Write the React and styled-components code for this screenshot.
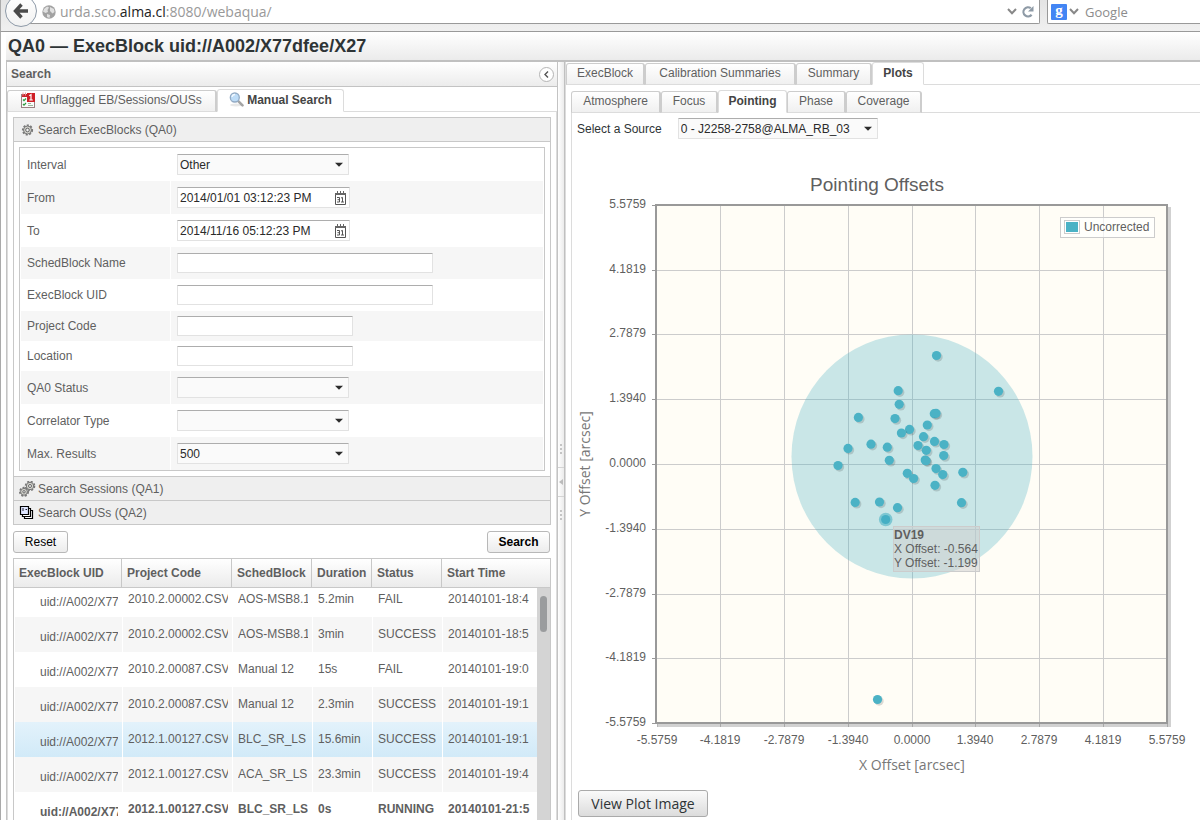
import React from "react";
import styled, { createGlobalStyle, css } from "styled-components";

const Global = createGlobalStyle`
  *, *::before, *::after { box-sizing: border-box; }
  html, body { margin: 0; height: 100%; overflow: hidden; }
  body {
    background: #fff;
    color: #5f5f5f;
    font-family: "Liberation Sans", Arial, sans-serif;
    font-size: 12px;
    line-height: 16px;
  }
  button, input, select { font: inherit; color: inherit; margin: 0; }
  #root { height: 100%; }
`;

const Page = styled.div`
  display: flex;
  flex-direction: column;
  height: 100vh;
  overflow: hidden;
`;

/* ---------- browser bar ---------- */

const BrowserBar = styled.header`
  display: flex;
  align-items: flex-start;
  flex: none;
  height: 32px;
  padding-left: 5px;
  background: linear-gradient(#e4e4e4, #f0f0f0);
  border-bottom: 1px solid #999;
  border-left: 1px solid #aaa;
  font-family: "Open Sans", sans-serif;
  font-size: 13px;
  line-height: 24px;
  color: #999;
`;

const BackButton = styled.button`
  position: relative;
  z-index: 1;
  flex: none;
  display: grid;
  place-items: center;
  width: 32px;
  height: 32px;
  margin: -5px -8px 0 -1px;
  padding: 0;
  border: 1px solid #8e9aa8;
  border-radius: 50%;
  background: linear-gradient(#fff, #f2f2f2);
`;

const AddressField = styled.div`
  display: flex;
  align-items: center;
  flex: 1;
  height: 24px;
  gap: 4px;
  padding: 0 4px 0 13px;
  background: #fff;
  border: solid #999;
  border-width: 0 1px 1px 0;
  border-radius: 0 0 2px 0;
`;

const Address = styled.div`
  flex: 1;
  font-size: 14px;
  strong { font-weight: 400; color: #222; }
`;

const WebSearch = styled.form`
  display: flex;
  align-items: center;
  flex: none;
  gap: 2px;
  width: 153px;
  height: 24px;
  margin-left: 7px;
  padding-left: 3px;
  background: #fff;
  border: solid #999;
  border-width: 0 0 1px 1px;
  border-radius: 0 0 0 2px;
  input {
    width: 100px;
    padding: 0 0 0 4px;
    border: 0;
    background: none;
    font-size: 13px;
  }
  input::placeholder { color: #8c8c8c; opacity: 1; }
`;

const Engine = styled.span`
  width: 16px;
  height: 16px;
  border-radius: 1px;
  background: #4285f4;
  color: #fff;
  font: 700 15px/12px "Liberation Serif", serif;
  text-align: center;
`;

/* ---------- page frame ---------- */

const Workspace = styled.div`
  display: flex;
  flex-direction: column;
  flex: 1;
  min-height: 0;
  padding-left: 5px;
  border-left: 1px solid #aaa;
`;

const Title = styled.h1`
  flex: none;
  height: 30px;
  margin: 0;
  padding-left: 2px;
  background: linear-gradient(#fff, #ebebeb);
  border-bottom: 2px solid #c0c0c0;
  color: #2e3436;
  font-size: 18px;
  line-height: 28px;
`;

const Split = styled.main`
  display: flex;
  flex: 1;
  min-height: 0;
`;

const SearchSide = styled.section`
  display: flex;
  flex-direction: column;
  flex: none;
  width: 552px;
  border: solid #c3c3c3;
  border-width: 0 1px;
`;

const SideHeader = styled.div`
  display: flex;
  align-items: center;
  justify-content: space-between;
  flex: none;
  height: 25px;
  padding: 0 3px 0 4px;
  background: linear-gradient(#fff, #ececec);
  border-bottom: 1px solid #c3c3c3;
  h2 { margin: 0; font-size: 12px; }
`;

const CollapseButton = styled.button`
  display: grid;
  place-items: center;
  width: 15px;
  height: 15px;
  padding: 0;
  border: 1px solid #b4b4b4;
  border-radius: 50%;
  background: #fff;
`;

const Splitter = styled.div`
  display: flex;
  flex-direction: column;
  align-items: center;
  flex: none;
  gap: 13px;
  width: 7px;
  padding-top: 382px;
  background: linear-gradient(90deg, #fff, #ebebeb);
  border-right: 1px solid #c0c0c0;
`;

const Handle = styled.div`
  display: grid;
  place-items: center;
  width: 100%;
  height: 30px;
  border: solid #d4d4d4;
  border-width: 1px 0;
`;

const ViewSide = styled.section`
  display: flex;
  flex-direction: column;
  flex: 1;
  min-width: 0;
  border-left: 1px solid #dcdcdc;
`;

/* ---------- tabs ---------- */

const TabBar = styled.div`
  display: flex;
  align-items: flex-end;
  flex: none;
  height: ${(p) => p.$height}px;
  border-bottom: 1px solid #dcdcdc;
`;

const Tab = styled.button`
  display: flex;
  align-items: center;
  justify-content: center;
  flex: none;
  gap: 2px;
  width: ${(p) => p.$width}px;
  height: 22px;
  margin-bottom: -1px;
  padding: 0 0 2px;
  border: 1px solid #cdcdcd;
  border-right-width: 2px;
  border-radius: 3px 3px 0 0;
  background: linear-gradient(#fff, #f0f0f0);
  border-bottom-color: #dcdcdc;
  ${(p) =>
    p.$active &&
    css`
      height: 23px;
      border: 1px solid #dcdcdc;
      border-bottom-color: #fff;
      background: #fff;
      font-weight: 700;
      color: #444;
    `}
`;

/* ---------- accordion and form ---------- */

const SideBody = styled.div`
  display: flex;
  flex-direction: column;
  flex: 1;
  min-height: 0;
  padding: 5px 5px 0;
  border: solid #dcdcdc;
  border-width: 0 1px;
`;

const Accordion = styled.div`
  flex: none;
  border: solid #c8c8c8;
  border-width: 0 1px 1px;
`;

const AccordionHead = styled.button`
  display: flex;
  align-items: center;
  gap: 2px;
  width: 100%;
  height: ${(p) => (p.$open ? 25 : 24)}px;
  padding: 0 5px;
  border: solid #c8c8c8;
  border-width: ${(p) => (p.$open ? "1px 0" : "1px 0 0")};
  background: #efefef;
`;

const FormFrame = styled.form`
  margin: 5px;
  border: 1px solid #c8c8c8;
`;

const Field = styled.div`
  display: flex;
  height: ${(p) => p.$height}px;
  margin: 0 1px;
  &:nth-child(even) { background: #f6f6f6; }
  label {
    display: flex;
    align-items: center;
    width: 150px;
    padding-left: 6px;
    border-right: 1px solid #fff;
  }
`;

const Control = styled.div`
  display: flex;
  align-items: center;
  padding-left: 6px;
`;

const boxed = css`
  border: 1px solid #e2e2e2;
  border-top-color: #adadad;
  border-radius: 1px;
  color: #2a2a2a;
`;

const TextBox = styled.input`
  ${boxed}
  width: ${(p) => p.$width}px;
  height: ${(p) => (p.$tall ? 21 : 20)}px;
  padding: 0 2px;
  background: #fff;
`;

const SelectWrap = styled.span`
  display: grid;
  align-items: center;
  width: ${(p) => p.$width}px;
  select, svg { grid-area: 1 / 1; }
  svg { justify-self: end; margin-right: 5px; pointer-events: none; }
`;

const SelectBox = styled.select`
  ${boxed}
  appearance: none;
  width: 100%;
  height: 21px;
  padding: 0 16px 0 2px;
  background: #fafafa;
`;

const DateWrap = styled.span`
  display: grid;
  align-items: center;
  input, svg { grid-area: 1 / 1; }
  svg { justify-self: end; margin-right: 3px; }
`;

const Actions = styled.div`
  display: flex;
  justify-content: space-between;
  flex: none;
  margin: 6px 1px 5px 0;
`;

const ActionButton = styled.button`
  width: ${(p) => p.$width}px;
  height: 22px;
  padding: 0;
  border: 1px solid #b8b8b8;
  border-radius: 3px;
  background: linear-gradient(#fff, #ececec);
  color: #000;
  font-weight: ${(p) => (p.$primary ? 700 : 400)};
`;

/* ---------- results ---------- */

const ResultFrame = styled.div`
  position: relative;
  flex: 1;
  min-height: 0;
  overflow: hidden;
  border: solid #c8c8c8;
  border-width: 1px 1px 0;
`;

const ResultTable = styled.table`
  width: 100%;
  table-layout: fixed;
  border-collapse: separate;
  border-spacing: 0;
  th, td {
    overflow: hidden;
    white-space: nowrap;
    text-align: left;
  }
  th {
    height: 29px;
    padding: 0 0 0 5px;
    border: solid #c8c8c8;
    border-width: 0 1px 1px 0;
    background: linear-gradient(#fff, #ebebeb);
  }
  th:last-child { border-right: 0; }
`;

const Row = styled.tr`
  height: ${(p) => (p.$first ? 29 : 35)}px;
  background: ${(p) =>
    p.$selected
      ? "linear-gradient(#e3f2fb, #d1eaf8)"
      : p.$shaded
        ? "#f6f6f6"
        : "#fff"};
  font-weight: ${(p) => (p.$running ? 700 : 400)};
  td {
    vertical-align: bottom;
    padding: 0 0 10px 5px;
    border-left: 1px solid #fff;
  }
  td:first-child { padding: 0 0 7px 25px; }
  td:last-child { padding-right: 18px; }
  div { overflow: hidden; margin-right: 4px; }
  td:last-child div { margin-right: 0; }
`;

const ScrollTrack = styled.div`
  position: absolute;
  top: 29px;
  right: 0;
  bottom: 0;
  width: 13px;
  padding: 8px 3px;
  background: #d4d4d4;
  &::before {
    content: "";
    display: block;
    width: 7px;
    height: 36px;
    border-radius: 4px;
    background: #9a9c9e;
  }
`;

/* ---------- plot side ---------- */

const ViewBody = styled.div`
  display: flex;
  flex-direction: column;
  flex: 1;
  min-height: 0;
  padding: 6px 0 0 5px;
`;

const PlotPane = styled.div`
  flex: 1;
  border-left: 1px solid #dcdcdc;
`;

const SourceRow = styled.div`
  display: flex;
  align-items: center;
  gap: 16px;
  padding: 5px 0 0 5px;
  color: #2e3436;
`;

const Chart = styled.svg`
  display: block;
  width: 100%;
  font-family: "Liberation Sans", Arial, sans-serif;
  font-size: 12px;
  fill: #5f5f5f;
`;

const PlotButton = styled.button`
  width: 130px;
  height: 27px;
  margin-left: 6px;
  padding: 0;
  border: 1px solid #aaa;
  border-radius: 3px;
  background: linear-gradient(#fafafa, #dcdcdc);
  color: #2e3436;
  font-family: "Open Sans", sans-serif;
  font-size: 14px;
`;

/* ---------- icons ---------- */

const Arrow = () => (
  <svg width="9" height="5" viewBox="0 0 9 5"><path d="M0 0.800h8L4 4.800z" fill="#2c2c2c" /></svg>
);

const Chevron = () => (
  <svg width="10" height="8" viewBox="0 0 10 8"><path d="M1 1l4 4.200 4-4.200" fill="none" stroke="#888" strokeWidth="2" /></svg>
);

const BackArrow = () => (
  <svg width="16" height="16" viewBox="0 0 16 16"><path d="M8.500 1.500L2.500 8l6 6.500M3 8h12" fill="none" stroke="#4a4a4a" strokeWidth="3.400" /></svg>
);

const Globe = () => (
  <svg width="14" height="14" viewBox="0 0 14 14">
    <circle cx="7" cy="7" r="6.700" fill="#a2a2a2" />
    <path d="M2 4l3-2.500 2 1L5.500 5 6 7 3.500 8 1 6.500zM8 2l4 2 .5 3-2 1.500L8 6zM5 9l3 1-.5 3L5 12z" fill="#e0e0e0" />
  </svg>
);

const Reload = () => (
  <svg width="14" height="14" viewBox="0 0 14 14">
    <path d="M10.600 9.800A4.600 4.600 0 1 1 9.800 3.200" fill="none" stroke="#8e9aa6" strokeWidth="2.200" />
    <path d="M12.500 1v5.600H7z" fill="#8e9aa6" />
  </svg>
);

const Checklist = () => (
  <svg width="17" height="16" viewBox="0 0 17 16">
    <rect x="0.500" y="2.500" width="13" height="13" fill="#fafafa" stroke="#9a8080" />
    <path d="M1 2h12v3H1z" fill="#c8262c" />
    <path d="M2 0.500v3M4.500 0.500v3" stroke="#e9a0a0" />
    <rect x="6" y="1" width="8" height="9" fill="#cf1f26" />
    <path d="M8.300 3.800l1.700-1.200V8M8.300 8h3.500" fill="none" stroke="#fff" strokeWidth="1.200" />
    <path d="M2 7.500l1 1.200L5 6.500M2 12l1 1.200 2-2.200" fill="none" stroke="#2c9a3c" strokeWidth="1.200" />
    <path d="M7 13.500h5M7 11.500h3" stroke="#9bb89b" />
  </svg>
);

const Magnifier = () => (
  <svg width="16" height="15" viewBox="0 0 16 15">
    <ellipse cx="7" cy="13" rx="6" ry="1.500" fill="#e8e8e8" />
    <path d="M9 8.800l4.500 4.500" stroke="#a4a4a4" strokeWidth="2.600" strokeLinecap="round" />
    <circle cx="5.800" cy="5.500" r="4.500" fill="#bddcf7" stroke="#92aac4" strokeWidth="1.300" />
    <path d="M3 5a3 3 0 0 1 3-2.500" fill="none" stroke="#f2f9ff" strokeWidth="1.300" />
  </svg>
);

const GearShape = ({ x, y, r }) => (
  <g transform={`translate(${x} ${y})`}>
    <circle r={r} fill="none" stroke="#777" strokeWidth="2" strokeDasharray="2 1.400" />
    <circle r={r - 0.6} fill="#d2d2cc" stroke="#777" />
    <circle r={r - 2.8} fill="#f4f4f4" stroke="#666" />
  </g>
);

const Gear = () => (
  <svg width="17" height="16" viewBox="0 0 17 16"><GearShape x={8.5} y={8} r={4.6} /></svg>
);

const Gears = () => (
  <svg width="17" height="16" viewBox="0 0 17 16">
    <GearShape x={5} y={10.8} r={4} />
    <GearShape x={11} y={5} r={4.3} />
  </svg>
);

const Stack = () => (
  <svg width="17" height="16" viewBox="0 0 17 16">
    <path d="M5.500 5.500h8v8h-8z" fill="#fff" stroke="#000" strokeWidth="1.200" />
    <path d="M3.500 3.500h8v8h-8z" fill="#fff" stroke="#000" strokeWidth="1.200" />
    <path d="M1.500 1.500h8v8h-8z" fill="#dfe6ff" stroke="#000" strokeWidth="1.200" />
    <path d="M4 3v3M6.500 4.500h1.500" stroke="#223" />
  </svg>
);

const CalendarIcon = () => (
  <svg width="12" height="14" viewBox="0 0 12 14">
    <path d="M0.500 3.500h10v10h-10z" fill="#fff" stroke="#555" />
    <path d="M0 2h11v2H0z" fill="#666" />
    <path d="M2.500 0v3M5.500 0v3M8.500 0v3" stroke="#666" />
    <path d="M2 6.500h2.500v4.500H2M2.500 8.700h2M6 7l1.500-.6V11M6 11h3" fill="none" stroke="#555" />
  </svg>
);

const Dots = () => (
  <svg width="3" height="10" viewBox="0 0 3 10"><path d="M0 0h2v2H0zM0 4h2v2H0zM0 8h2v2H0z" fill="#c4c4c4" /></svg>
);

/* ---------- data ---------- */

const fields = [
  { id: "interval", label: "Interval", type: "select", value: "Other", height: 33 },
  { id: "from", label: "From", type: "date", value: "2014/01/01 03:12:23 PM", height: 33 },
  { id: "to", label: "To", type: "date", value: "2014/11/16 05:12:23 PM", height: 33 },
  { id: "sched", label: "SchedBlock Name", type: "text", width: 256, height: 32 },
  { id: "exec", label: "ExecBlock UID", type: "text", width: 256, height: 32 },
  { id: "project", label: "Project Code", type: "text", width: 176, height: 30 },
  { id: "location", label: "Location", type: "text", width: 176, height: 30 },
  { id: "status", label: "QA0 Status", type: "select", value: "", height: 33 },
  { id: "correlator", label: "Correlator Type", type: "select", value: "", height: 33 },
  { id: "max", label: "Max. Results", type: "select", value: "500", height: 33 },
];

const rows = [
  ["2010.2.00002.CSV", "AOS-MSB8.1", "5.2min", "FAIL", "20140101-18:4"],
  ["2010.2.00002.CSV", "AOS-MSB8.1", "3min", "SUCCESS", "20140101-18:5"],
  ["2010.2.00087.CSV", "Manual 12", "15s", "FAIL", "20140101-19:0"],
  ["2010.2.00087.CSV", "Manual 12", "2.3min", "SUCCESS", "20140101-19:1"],
  ["2012.1.00127.CSV", "BLC_SR_LS", "15.6min", "SUCCESS", "20140101-19:1"],
  ["2012.1.00127.CSV", "ACA_SR_LS", "23.3min", "SUCCESS", "20140101-19:4"],
  ["2012.1.00127.CSV", "BLC_SR_LS", "0s", "RUNNING", "20140101-21:5"],
];

const ticks = ["5.5759", "4.1819", "2.7879", "1.3940", "0.0000", "-1.3940", "-2.7879", "-4.1819", "-5.5759"];
const gridX = [657, 720, 784, 848, 912, 975, 1039, 1103, 1167];
const gridY = [205, 270, 334, 399, 464, 529, 594, 658, 723];

const points = [
  [936.5, 355.5], [998.5, 391.3], [898.2, 390.7], [899.2, 404.3], [858.4, 417.4],
  [895, 418.6], [934.3, 413.7], [936, 413.3], [927.3, 425], [909.5, 429.4],
  [901.4, 433], [923.5, 436.7], [934.5, 441.4], [944, 444.5], [918, 445.5],
  [926.3, 450.3], [943.7, 455.6], [925.2, 460], [926, 460.7], [871, 444.2],
  [887.3, 447.2], [889.3, 460.3], [848, 448.4], [838, 465.5], [907.3, 473.3],
  [913.6, 478.5], [936, 468.6], [942.7, 474.6], [962.8, 472.3], [935, 485.3],
  [855.2, 502.4], [879.5, 502], [897.5, 507.7], [961.5, 502.7], [877.5, 699.5],
];

function PointingChart() {
  return (
    <Chart viewBox="572 139 628 651" role="img" aria-label="Pointing Offsets">
      <text x="877" y="191" fontSize="19" textAnchor="middle">Pointing Offsets</text>
      <path d="M1169.500 207v518.500H658" fill="none" stroke="#000" strokeOpacity=".18" strokeWidth="3" />
      <rect x="656" y="205" width="511" height="518" fill="#fffdf6" />
      {gridX.slice(1, -1).map((x) => <path key={x} d={`M${x + 0.5} 206V726`} stroke="#ccc" />)}
      {gridY.slice(1, -1).map((y) => <path key={y} d={`M652 ${y + 0.5}H1166`} stroke="#ccc" />)}
      {gridX.map((x) => <path key={x} d={`M${x + 0.5} 723v4`} stroke="#999" strokeOpacity=".7" />)}
      {gridY.map((y) => <path key={y} d={`M652 ${y + 0.5}h4`} stroke="#999" />)}
      <rect x="656" y="205" width="511" height="518" fill="none" stroke="#999" strokeWidth="2" />
      {ticks.map((t, i) => <text key={t} x="646" y={gridY[i] + 3} textAnchor="end">{t}</text>)}
      {[...ticks].reverse().map((t, i) => <text key={t} x={gridX[i]} y="744" textAnchor="middle">{t}</text>)}
      <ellipse cx="912" cy="456.500" rx="120.500" ry="122" fill="#4bb2c5" fillOpacity=".3" />
      {points.map(([x, y], i) => (
        <g key={i}>
          <circle cx={x + 1.6} cy={y + 1.6} r="4.600" fill="#000" fillOpacity=".14" />
          <circle cx={x} cy={y} r="4.600" fill="#4bb2c5" />
        </g>
      ))}
      <circle cx="885.700" cy="519.500" r="6.800" fill="#4bb2c5" fillOpacity=".6" />
      <circle cx="885.700" cy="519.500" r="4.600" fill="#45afc4" />
      <g>
        <rect x="893.500" y="526.500" width="86" height="45" fill="#d0d0d0" fillOpacity=".55" stroke="#ccc" />
        <text x="894" y="539" fontWeight="700">DV19</text>
        <text x="894" y="553">X Offset: -0.564</text>
        <text x="894" y="567">Y Offset: -1.199</text>
      </g>
      <rect x="1060.500" y="217.500" width="94" height="20" fill="#fff" fillOpacity=".7" stroke="#ccc" />
      <rect x="1064.500" y="220.500" width="15" height="13" fill="#fff" stroke="#ccc" />
      <rect x="1066" y="222" width="12" height="10" fill="#4bb2c5" />
      <text x="1084" y="231">Uncorrected</text>
      <g fontFamily="Open Sans, sans-serif" fontSize="14" fill="#777" textAnchor="middle">
        <text x="912" y="770">X Offset [arcsec]</text>
        <text transform="translate(590 464) rotate(-90)">Y Offset [arcsec]</text>
      </g>
    </Chart>
  );
}

function Select({ id, value, width }) {
  return (
    <SelectWrap $width={width}>
      <SelectBox id={id} defaultValue={value}><option value={value}>{value}</option></SelectBox>
      <Arrow />
    </SelectWrap>
  );
}

function FieldControl({ field }) {
  if (field.type === "select") return <Select id={field.id} value={field.value} width={172} />;
  if (field.type === "date")
    return (
      <DateWrap>
        <TextBox id={field.id} $width={173} $tall defaultValue={field.value} />
        <CalendarIcon />
      </DateWrap>
    );
  return <TextBox id={field.id} $width={field.width} />;
}

export default function App() {
  return (
    <Page>
      <Global />
      <BrowserBar>
        <BackButton type="button" aria-label="Back"><BackArrow /></BackButton>
        <AddressField>
          <Globe />
          <Address>urda.sco.<strong>alma.cl</strong>:8080/webaqua/</Address>
          <Chevron />
          <Reload />
        </AddressField>
        <WebSearch>
          <Engine>g</Engine>
          <Chevron />
          <input aria-label="Web search" placeholder="Google" />
        </WebSearch>
      </BrowserBar>
      <Workspace>
        <Title>QA0 — ExecBlock uid://A002/X77dfee/X27</Title>
        <Split>
          <SearchSide>
            <SideHeader>
              <h2>Search</h2>
              <CollapseButton type="button" aria-label="Collapse">
                <svg width="5" height="7" viewBox="0 0 5 7"><path d="M4 .5l-3 3 3 3" fill="none" stroke="#555" strokeWidth="1.400" /></svg>
              </CollapseButton>
            </SideHeader>
            <TabBar $height={25} role="tablist">
              <Tab role="tab" $width={210}><Checklist />Unflagged EB/Sessions/OUSs</Tab>
              <Tab role="tab" $width={127} $active><Magnifier />Manual Search</Tab>
            </TabBar>
            <SideBody>
              <Accordion>
                <AccordionHead type="button" $open><Gear />Search ExecBlocks (QA0)</AccordionHead>
                <FormFrame>
                  {fields.map((f) => (
                    <Field key={f.id} $height={f.height}>
                      <label htmlFor={f.id}>{f.label}</label>
                      <Control><FieldControl field={f} /></Control>
                    </Field>
                  ))}
                </FormFrame>
                <AccordionHead type="button"><Gears />Search Sessions (QA1)</AccordionHead>
                <AccordionHead type="button"><Stack />Search OUSs (QA2)</AccordionHead>
              </Accordion>
              <Actions>
                <ActionButton type="button" $width={55}>Reset</ActionButton>
                <ActionButton type="button" $width={63} $primary>Search</ActionButton>
              </Actions>
              <ResultFrame>
                <ResultTable>
                  <colgroup>
                    <col width="108" /><col width="110" /><col width="80" />
                    <col width="60" /><col width="70" /><col />
                  </colgroup>
                  <thead>
                    <tr>
                      {["ExecBlock UID", "Project Code", "SchedBlock", "Duration", "Status", "Start Time"].map((h) => (
                        <th key={h}>{h}</th>
                      ))}
                    </tr>
                  </thead>
                  <tbody>
                    {rows.map((r, i) => (
                      <Row key={i} $first={i === 0} $shaded={i % 2 === 1} $selected={i === 4} $running={i === 6}>
                        <td><div>uid://A002/X77</div></td>
                        {r.map((c, j) => <td key={j}><div>{c}</div></td>)}
                      </Row>
                    ))}
                  </tbody>
                </ResultTable>
                <ScrollTrack />
              </ResultFrame>
            </SideBody>
          </SearchSide>
          <Splitter>
            <Dots />
            <Handle><svg width="4" height="6" viewBox="0 0 4 6"><path d="M4 0v6L0 3z" fill="#bbb" /></svg></Handle>
            <Dots />
          </Splitter>
          <ViewSide>
            <TabBar $height={23} role="tablist">
              <Tab role="tab" $width={79}>ExecBlock</Tab>
              <Tab role="tab" $width={151}>Calibration Summaries</Tab>
              <Tab role="tab" $width={76}>Summary</Tab>
              <Tab role="tab" $width={52} $active>Plots</Tab>
            </TabBar>
            <ViewBody>
              <TabBar $height={22} role="tablist">
                <Tab role="tab" $width={90}>Atmosphere</Tab>
                <Tab role="tab" $width={57}>Focus</Tab>
                <Tab role="tab" $width={69} $active>Pointing</Tab>
                <Tab role="tab" $width={59}>Phase</Tab>
                <Tab role="tab" $width={76}>Coverage</Tab>
              </TabBar>
              <PlotPane>
                <SourceRow>
                  <label htmlFor="source">Select a Source</label>
                  <Select id="source" value="0 - J2258-2758@ALMA_RB_03" width={200} />
                </SourceRow>
                <PointingChart />
                <PlotButton type="button">View Plot Image</PlotButton>
              </PlotPane>
            </ViewBody>
          </ViewSide>
        </Split>
      </Workspace>
    </Page>
  );
}
